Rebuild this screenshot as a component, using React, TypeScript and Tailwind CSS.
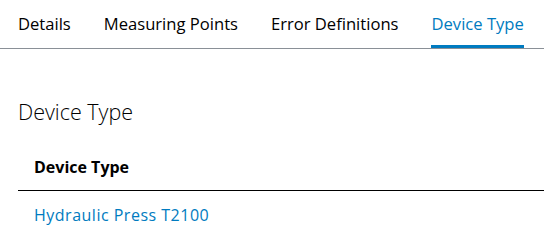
import React from "react"

const TABS = ["Details", "Measuring Points", "Error Definitions", "Device Type"]

export default function App() {
  const active = "Device Type"

  return (
    <div className="h-[236px] w-[544px] bg-white text-black" style={{ fontFamily: '"Open Sans", sans-serif' }}>
      <nav className="flex h-[49px] gap-[33px] border-b border-[#8a9097] pl-[18px]">
        {TABS.map((tab) => (
          <div
            key={tab}
            className={`flex items-center border-b-[3px] pt-[3px] text-[16.6px] ${
              tab === active ? "border-[#007bc0] text-[#007bc0]" : "border-transparent text-black"
            }`}
          >
            {tab}
          </div>
        ))}
      </nav>

      <section className="pl-[18px] pt-[48px]">
        <h2 className="text-[21.5px] font-light leading-[30px]">Device Type</h2>

        <table className="mt-[13px] w-full border-collapse text-left">
          <thead>
            <tr className="border-b border-black">
              <th className="h-[50px] px-4 pt-[4px] text-[16px] font-bold">Device Type</th>
            </tr>
          </thead>
          <tbody>
            <tr>
              <td className="h-[48px] px-4 pt-[2px] text-[16px] tracking-[0.5px] text-[#007bc0]">Hydraulic Press T2100</td>
            </tr>
          </tbody>
        </table>
      </section>
    </div>
  )
}
